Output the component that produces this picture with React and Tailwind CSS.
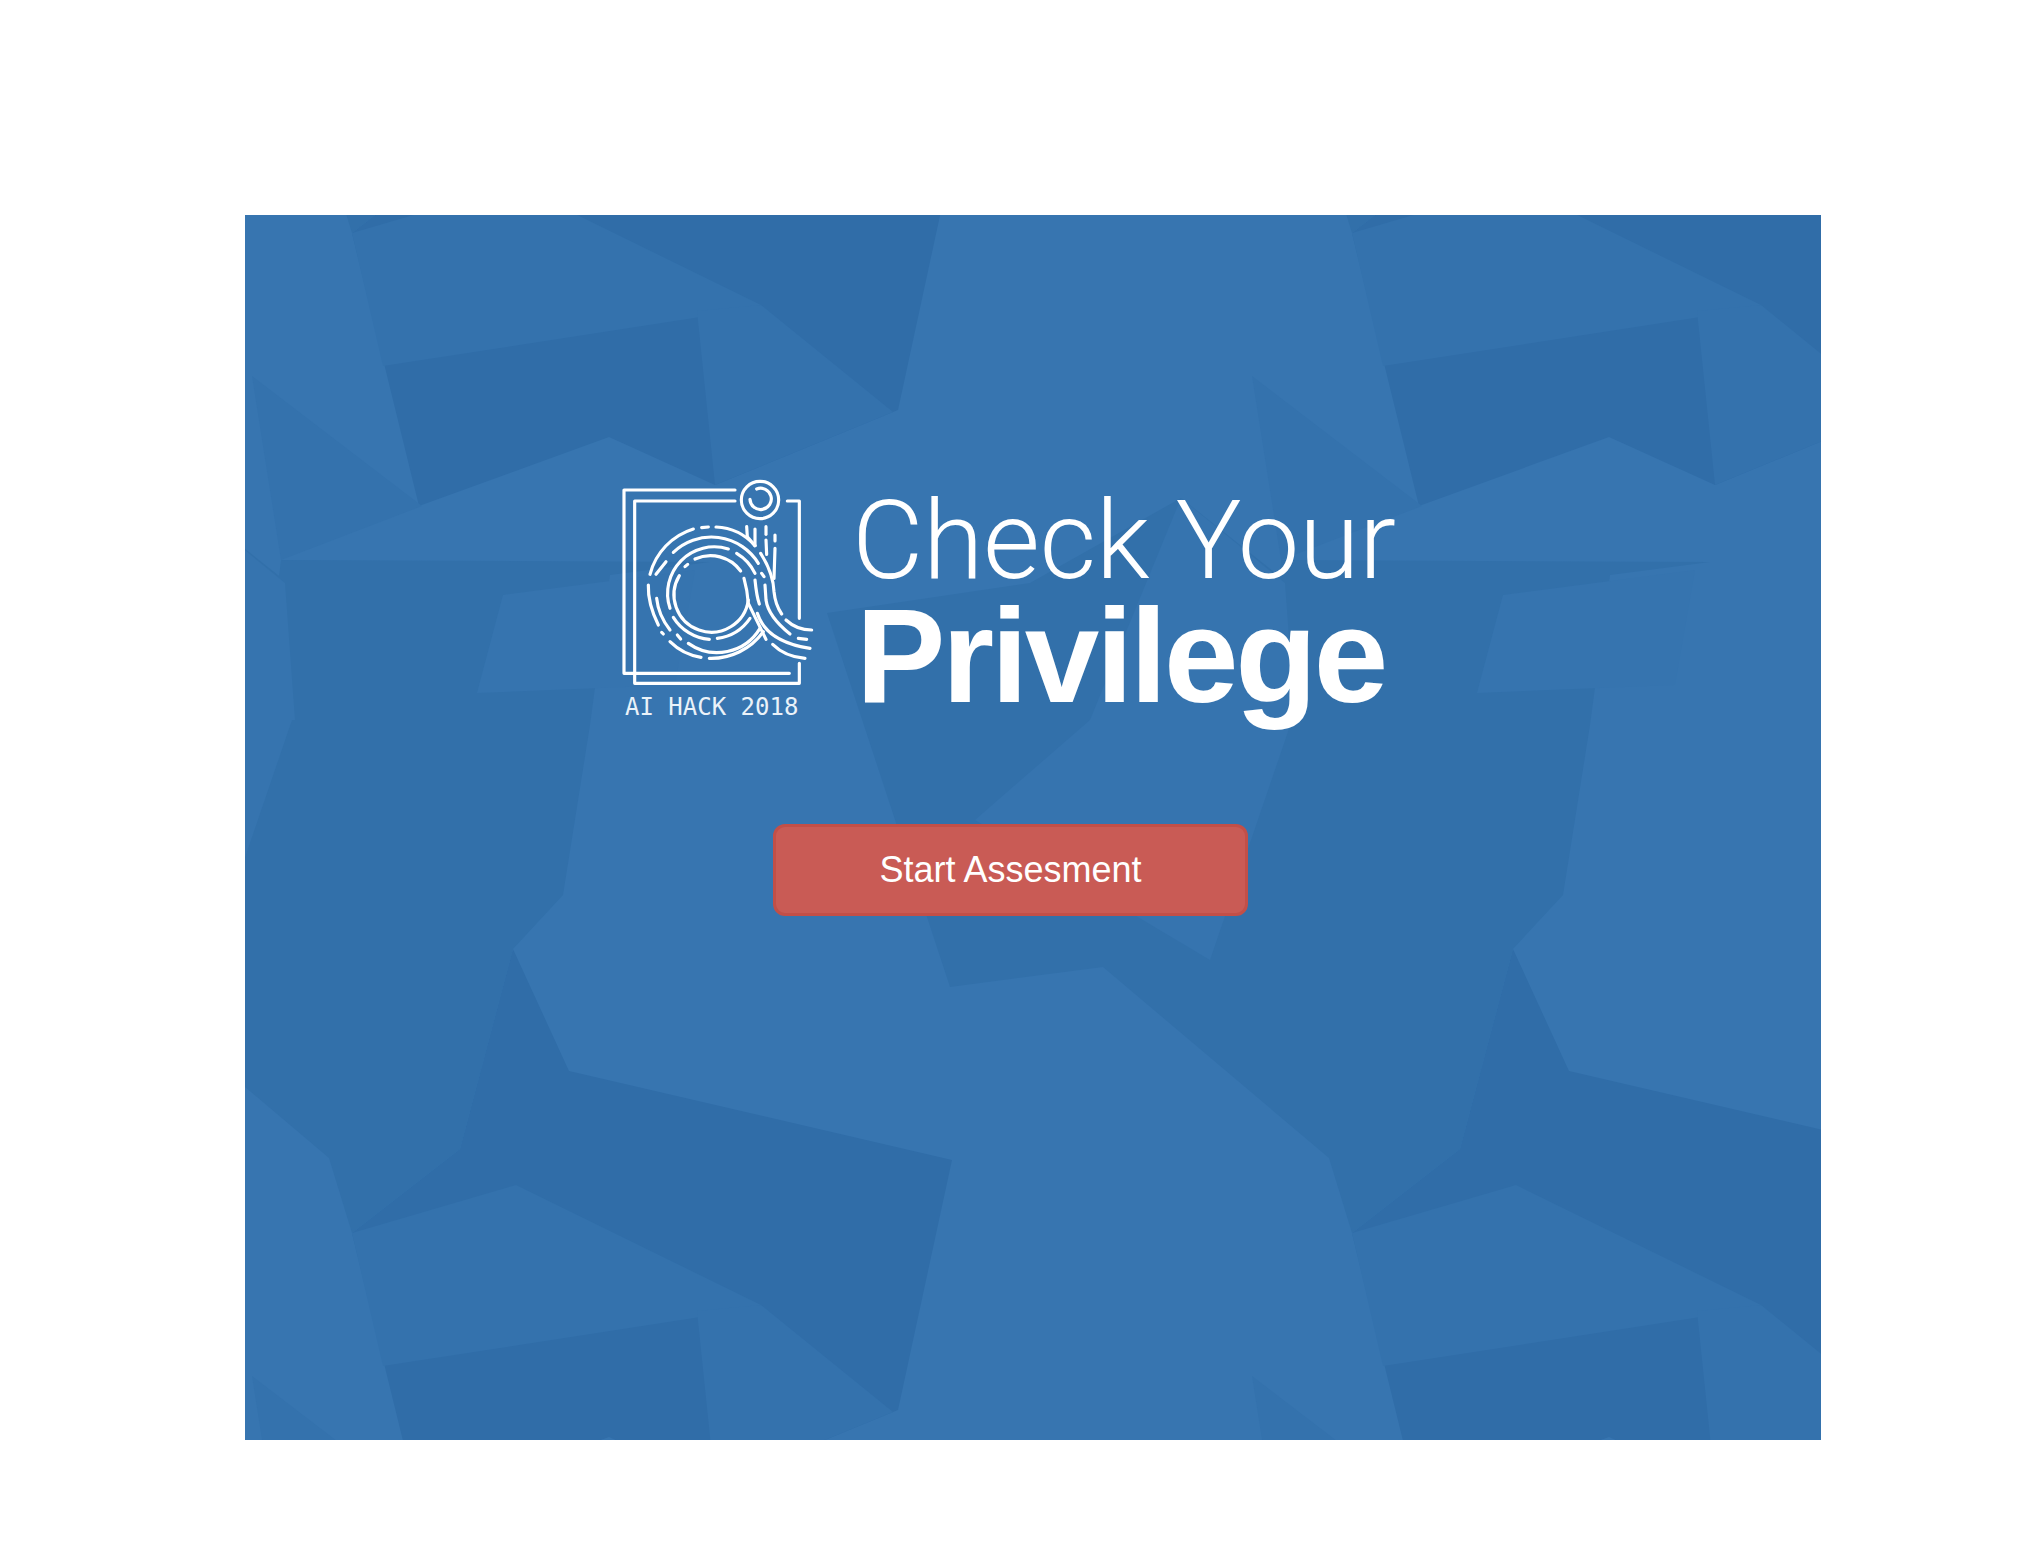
import React from 'react'

// ── Background tile ───────────────────────────────────────────────────────────
// Low-poly pattern repeats every 1000px both ways, shapes may spill over the tile.
const DARKEST = '#306da8'
const DARK = '#3270aa'
const MID = '#3472ad'
const SOFT = '#3674af'

const SHAPES = [
  // big dark shape under the button
  [DARKEST, '268,734 324,856 707,945 653,1195 648,1197 470,1270 364,1222 174,1291 107,1018 215,934'],
  [MID, '107,1018 271,970 516,1090 449,1103 138,1151'],
  [MID, '452,1096 516,1090 648,1197 470,1270'],
  // dark shape behind the title, spills into the previous tile
  [DARK, '36,345 465,347 365,360 345,510 318,680 268,734 215,934 107,1018 84,943 -142,752 -295,772 -418,398 -215,368 -64,283 43,368 0,360 58,490 13,610 0,650'],
  [SOFT, '232,478 258,380 450,355 430,470'],
  [SOFT, '-270,605 -155,505 47,505 -35,745'],
  [SOFT, '-64,283 40,368 50,505 -155,505'],
  // wedge on the left edge
  [MID, '7,161 177,291 36,345'],
]

const OFFSETS = [0, 1000, 2000]

function Background() {
  return (
    <svg className="absolute inset-0" width="1576" height="1225" viewBox="0 0 1576 1225">
      {OFFSETS.map(ox => [-1000, 0, 1000].map(oy => (
        <g key={`${ox}-${oy}`} transform={`translate(${ox} ${oy})`}>
          {SHAPES.map(([fill, points], i) => <polygon key={i} fill={fill} points={points} />)}
        </g>
      )))}
    </svg>
  )
}

// ── Logo ──────────────────────────────────────────────────────────────────────
const LOGO_PATHS = [
  // frames
  'M405 90H72V640H568', 'M405 123H104V670H598V610', 'M562 123H598V475',
  // dot of the i
  'M470 87A32 32 0 1 1 450 118',
  // inner ring and stem
  'M238 347A112 112 0 1 0 445 420', 'M432 355Q442 390 445 430L498 538',
  'M285 297A112 112 0 0 1 422 333', 'M255 320L263 313',
  // third ring
  'M210 445A140 140 0 0 1 385 267', 'M410 280A140 140 0 0 1 465 340', 'M485 340L492 350',
  'M220 472A140 140 0 0 0 328 538', 'M352 535A140 140 0 0 0 450 475',
  // second ring
  'M220 277A165 165 0 0 1 475 310', 'M168 343L198 305',
  'M170 415Q175 465 210 510', 'M232 525L242 537', 'M265 550A150 150 0 0 0 480 505',
  // outer ring
  'M150 343A193 193 0 0 1 280 207', 'M305 203L325 201', 'M348 201A165 165 0 0 1 465 257',
  'M145 375Q143 430 175 495', 'M185 517L190 522',
  'M210 545A168 168 0 0 0 303 592', 'M328 595A193 193 0 0 0 490 515',
  // stems over the tail
  'M440 200L442 230L465 257', 'M465 207V257', 'M498 200V223', 'M498 240L500 283',
  'M525 225V243', 'M525 265L522 355', 'M482 280Q520 340 522 395Q526 435 545 462',
  'M495 375L498 420Q505 470 570 522', 'M465 360Q470 410 478 432',
  // tail
  'M472 460Q499 545 630 565', 'M558 480Q590 510 635 510', 'M595 535L620 538', 'M518 553Q555 590 615 595',
]

function Logo() {
  return (
    <svg className="block" width="240" height="230" viewBox="0 0 720 690" fill="none" stroke="#fff" strokeWidth="9.5" strokeLinecap="round" strokeLinejoin="round">
      <circle cx="480" cy="120" r="56" />
      {LOGO_PATHS.map((d, i) => <path key={i} d={d} />)}
    </svg>
  )
}

export default function App() {
  return (
    <div className="min-h-[1548px] bg-white pt-[215px] pl-[245px]">
      <div className="relative w-[1576px] h-[1225px] overflow-hidden bg-[#3775b0]">
        <Background />
        <div className="relative pt-[245px]">
          <div className="flex ml-[355px]">
            <div className="w-[240px]">
              <Logo />
              <p className="pl-[25px] whitespace-nowrap text-[24px] leading-[28px] mt-[3px] text-[#eaf2f9] font-['DejaVu_Sans_Mono',monospace]">AI HACK 2018</p>
            </div>
            <div className="ml-[12px] text-white">
              <h1 className="text-[110px] leading-[114px] font-light tracking-[-0.4px] font-['Roboto',sans-serif] mt-[24px]">Check Your</h1>
              <h2 className="text-[134px] leading-[121px] font-bold tracking-[-3.3px] font-['Liberation_Sans',Arial,sans-serif] ml-[4px] mt-[-3px]">Privilege</h2>
            </div>
          </div>
          <button className="block ml-[528px] mt-[103px] w-[475px] h-[92px] rounded-[12px] border-[3px] border-[#c24f48] bg-[#c95b55] text-white text-[36px] font-['Liberation_Sans',Arial,sans-serif]">
            Start Assesment
          </button>
        </div>
      </div>
    </div>
  )
}
